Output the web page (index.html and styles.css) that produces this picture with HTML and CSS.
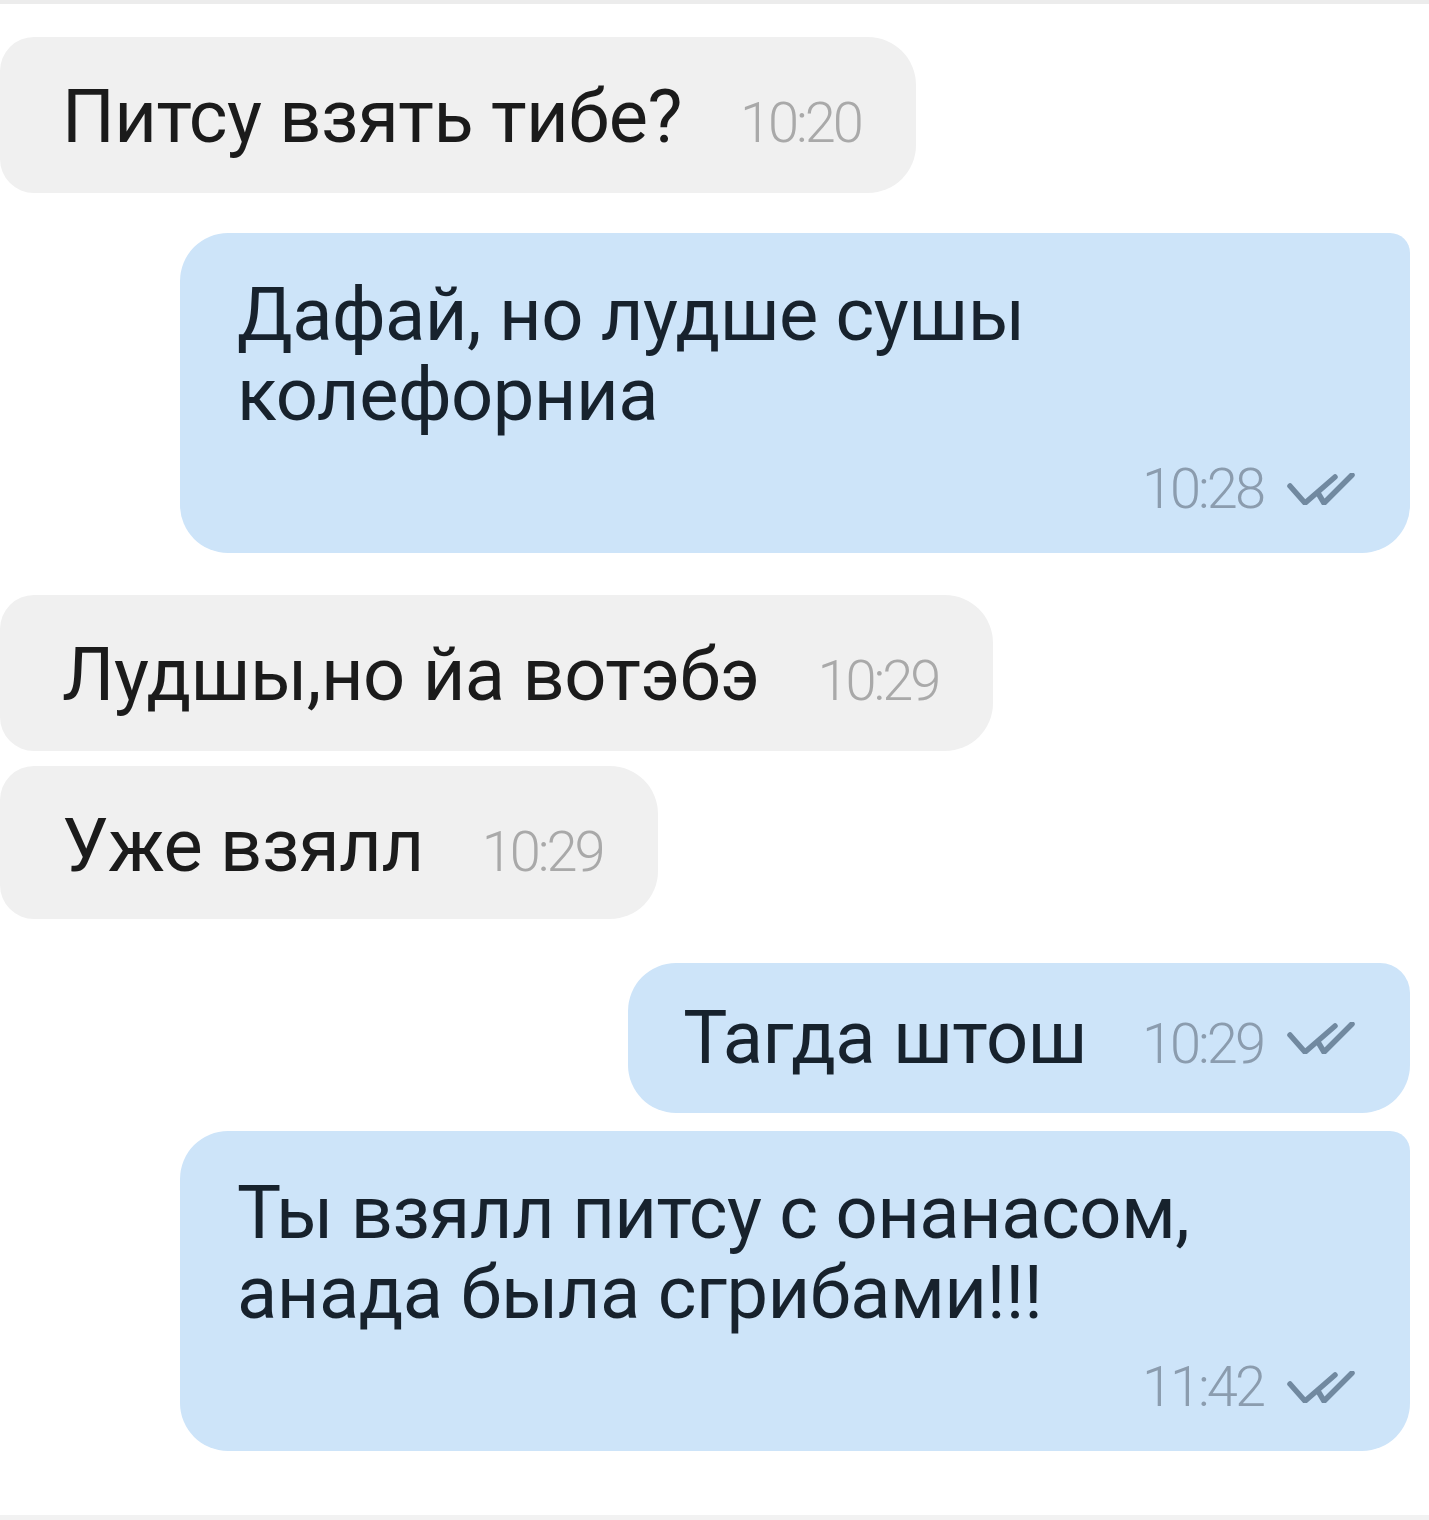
FILE: index.html
```html
<!DOCTYPE html>
<html lang="ru">
<head>
<meta charset="utf-8">
<title>Чат</title>
<link rel="stylesheet" href="styles.css">
</head>
<body>
<div class="chat">
  <div class="msg in gap-first">
    <span class="text">Питсу взять тибе?</span>
    <span class="time">10:20</span>
  </div>

  <div class="msg out multi gap-40">
    <div class="text">Дафай, но лудше сушы<br>колефорниа</div>
    <div class="meta">
      <span class="time">10:28</span>
      <svg class="checks" viewBox="0 0 68 32" aria-hidden="true"><path d="M3 13 L18 30 L48 4 M31 20 L37 30 L65 2"/></svg>
    </div>
  </div>

  <div class="msg in gap-42">
    <span class="text">Лудшы,но йа вотэбэ</span>
    <span class="time">10:29</span>
  </div>

  <div class="msg in short gap-15">
    <span class="text">Уже взялл</span>
    <span class="time">10:29</span>
  </div>

  <div class="msg out single gap-44">
    <span class="text">Тагда штош</span>
    <span class="time">10:29</span>
    <svg class="checks" viewBox="0 0 68 32" aria-hidden="true"><path d="M3 13 L18 30 L48 4 M31 20 L37 30 L65 2"/></svg>
  </div>

  <div class="msg out multi gap-18">
    <div class="text">Ты взялл питсу с онанасом,<br>анада была сгрибами!!!</div>
    <div class="meta">
      <span class="time">11:42</span>
      <svg class="checks" viewBox="0 0 68 32" aria-hidden="true"><path d="M3 13 L18 30 L48 4 M31 20 L37 30 L65 2"/></svg>
    </div>
  </div>
</div>
</body>
</html>
```

FILE: styles.css
```css
html, body {
  margin: 0;
  padding: 0;
  background: #ffffff;
}

body {
  font-family: Roboto, "Noto Sans", "Liberation Sans", sans-serif;
  width: 1429px;
  height: 1520px;
  overflow: hidden;
  box-sizing: border-box;
  border-top: 4px solid #ececec;
  border-bottom: 5px solid #f2f2f2;
}

.chat {
  display: flex;
  flex-direction: column;
  align-items: flex-start;
}

.msg {
  display: flex;
  align-items: baseline;
  gap: 58px;
  box-sizing: border-box;
  padding: 40px 55px 36px 62px;
  border-radius: 46px;
  color: #1b1b1b;
}

.msg.in {
  background: #f0f0f0;
  border-radius: 34px 48px 48px 34px;
}

.msg.in.short {
  padding-bottom: 33px;
}

.msg.out {
  background: #cde4f9;
  color: #17222d;
  align-self: flex-end;
  margin-right: 19px;
  padding-left: 55px;
  gap: 55px;
  border-radius: 48px 30px 48px 48px;
}

.msg.out.single {
  padding-top: 35px;
  padding-bottom: 35px;
}

.msg.multi {
  display: flex;
  flex-direction: column;
  align-items: stretch;
  gap: 0;
  width: 1230px;
  padding: 42px 55px 34px 57px;
  border-radius: 48px 20px 48px 48px;
}

.text {
  font-size: 74px;
  line-height: 80px;
  letter-spacing: -0.5px;
  font-weight: 400;
}

.time {
  font-size: 56px;
  line-height: 60px;
  font-weight: 300;
  letter-spacing: -3px;
  color: #a9a9a9;
}

.out .time {
  color: #8b9cae;
}

.meta {
  display: flex;
  justify-content: flex-end;
  align-items: baseline;
  margin-top: 24px;
}

.checks {
  width: 68px;
  height: 32px;
  margin-left: 24px;
  align-self: center;
  fill: none;
  stroke: #7189a0;
  stroke-width: 5.5;
  stroke-linecap: round;
  stroke-linejoin: round;
}

.msg.out > .checks {
  margin-left: -31px;
}

.gap-first { margin-top: 33px; }
.gap-40 { margin-top: 40px; }
.gap-42 { margin-top: 42px; }
.gap-15 { margin-top: 15px; }
.gap-44 { margin-top: 44px; }
.gap-18 { margin-top: 18px; }
```
